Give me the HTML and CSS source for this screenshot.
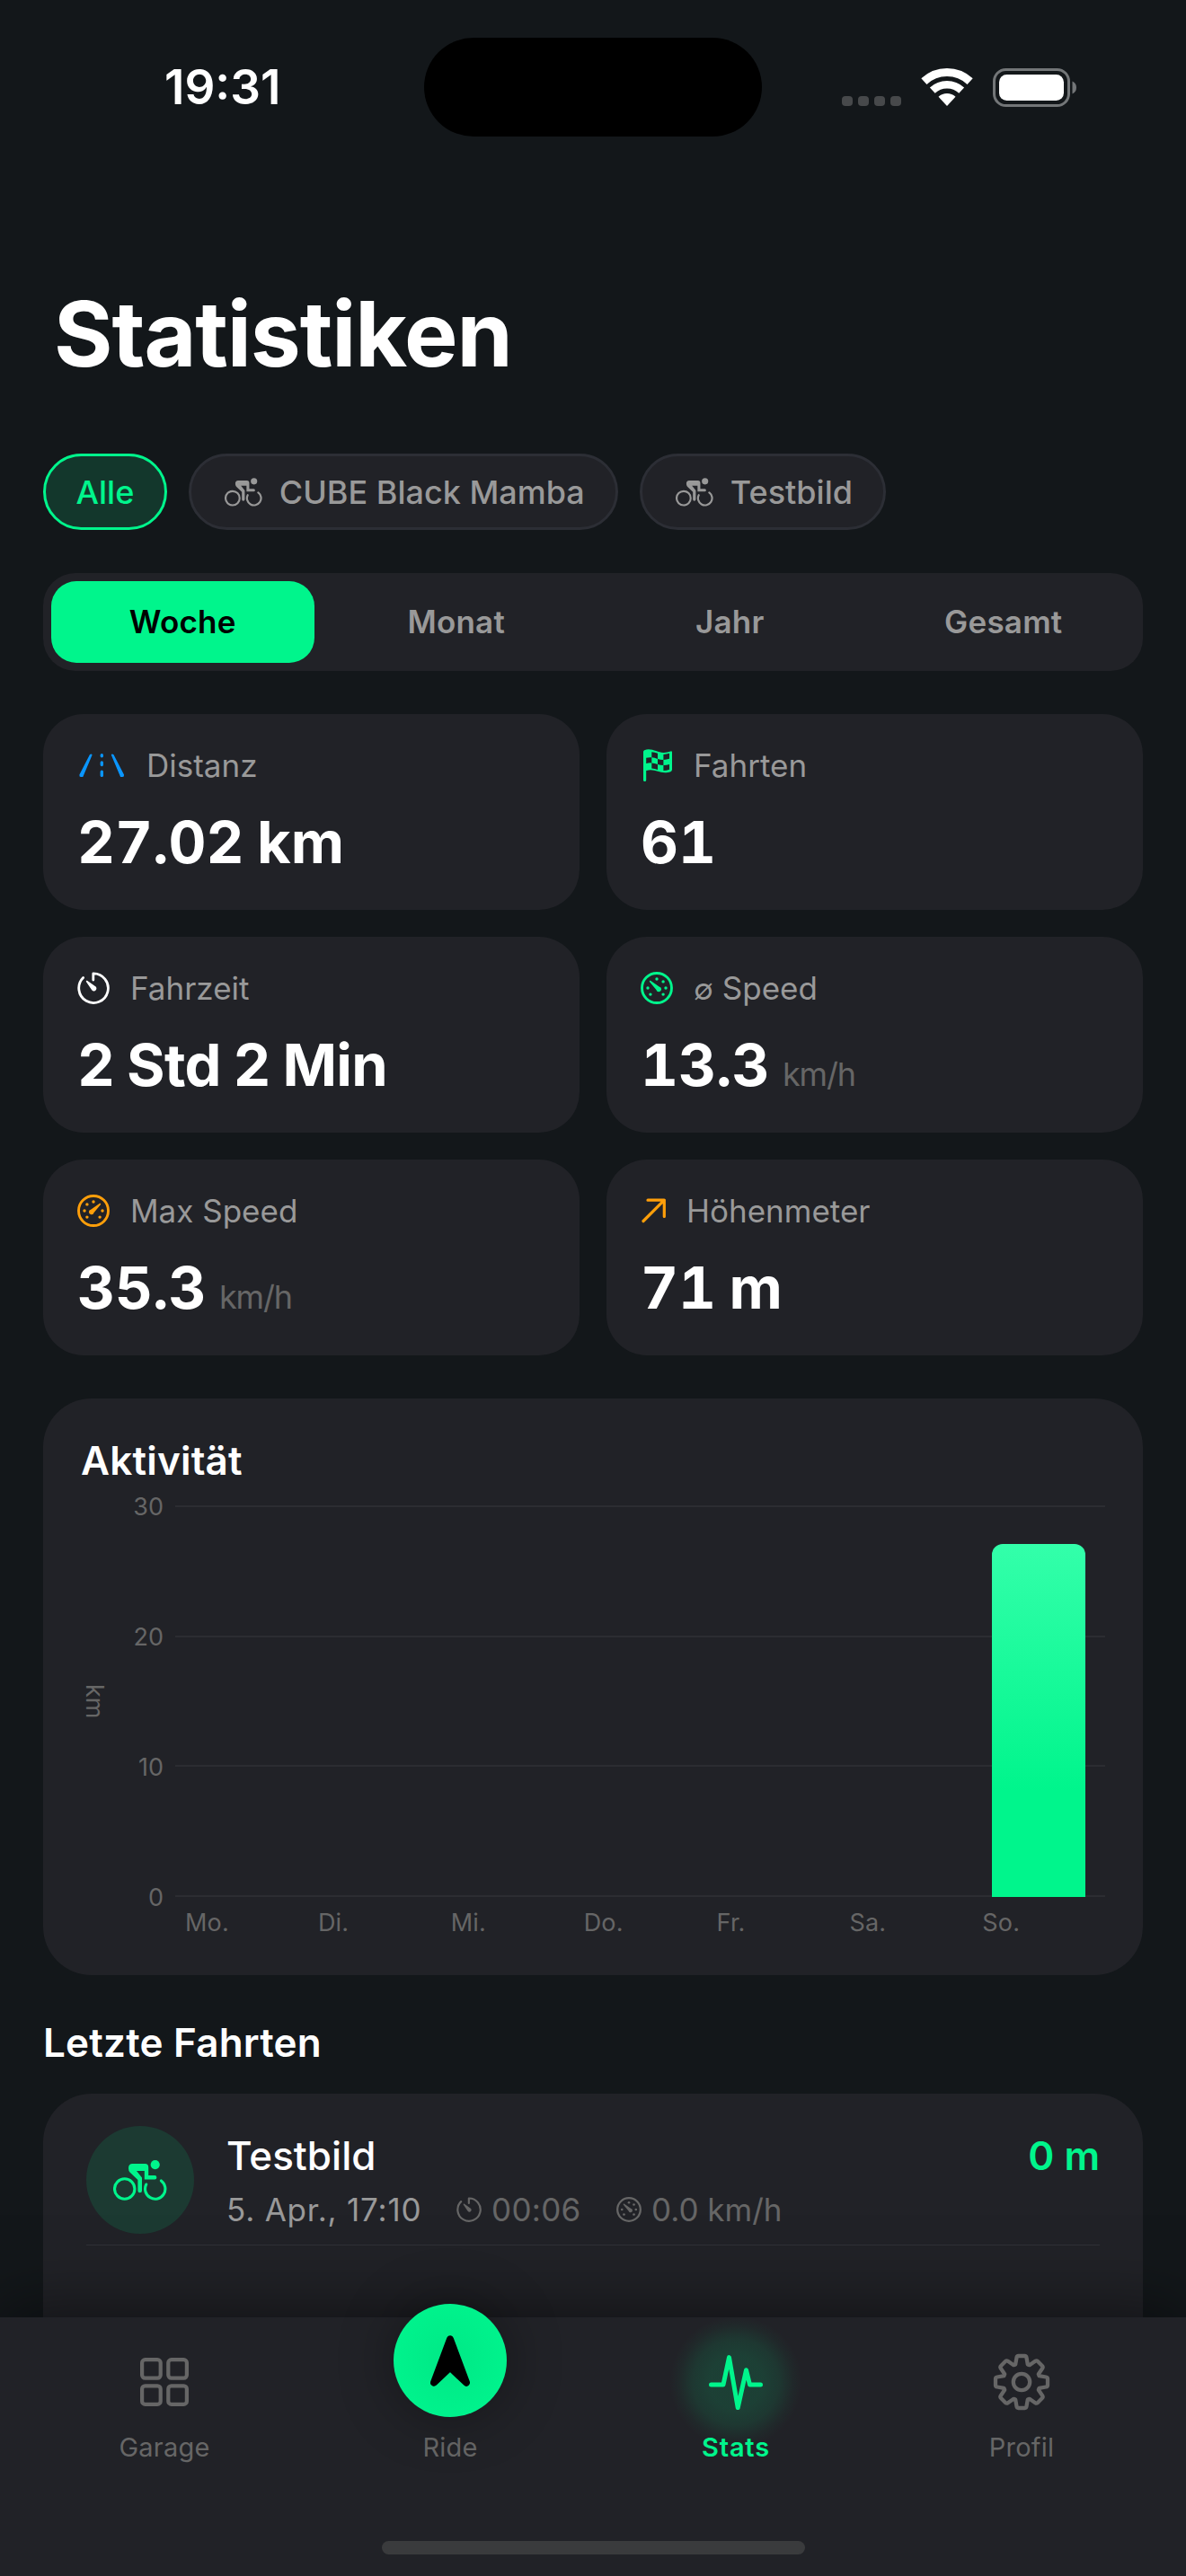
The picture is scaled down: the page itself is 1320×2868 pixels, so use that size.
FILE: index.html
```html
<!DOCTYPE html>
<html lang="de">
<head>
    <meta charset="UTF-8">
    <meta name="viewport" content="width=device-width, initial-scale=1.0">
    <title>Statistiken</title>
    <link rel="stylesheet" href="styles.css">
</head>
<body>
    <!-- Icons -->
    <svg class="sprite" width="0" height="0">
        <symbol id="bike" viewBox="0 0 60 45">
            <circle cx="12.7" cy="32" r="11.2" fill="none" stroke="currentColor" stroke-width="3.1"/>
            <path d="M36.7 27A11.2 11.2 0 1 0 53.4 23" fill="none" stroke="currentColor" stroke-width="3.1" stroke-linecap="round"/>
            <circle cx="46.7" cy="5.1" r="5.1" fill="currentColor"/>
            <path d="M21.5 4H35.5Q39.2 4 39.2 8V17H46.2a2.2 2.2 0 0 1 0 4.4H34.8V12H26L32 19.5V34a2.3 2.3 0 0 1-4.6 0V22L18.5 13.6Q17 11.8 17 9Q17 4 21.5 4Z" fill="currentColor"/>
        </symbol>
        <symbol id="timer" viewBox="0 0 36 36">
            <path d="M17.8 9V1.9A16.3 16.3 0 1 1 6.6 6.6" fill="none" stroke="currentColor" stroke-width="2.8" stroke-linecap="round" stroke-linejoin="round"/>
            <path d="M11 9.8L19.9 16a2.9 2.9 0 1 1-3.9 4L9.9 10.9Q9.6 9.2 11 9.8Z" fill="currentColor"/>
        </symbol>
        <symbol id="gauge" viewBox="0 0 36 36">
            <circle cx="18" cy="18" r="16.5" fill="none" stroke="currentColor" stroke-width="2.9"/>
            <path d="M11 9.8L20.6 16.4a2.9 2.9 0 1 1-3.2 3.6L9.9 10.9Q9.6 9.2 11 9.8Z" fill="currentColor"/>
            <g fill="currentColor">
                <circle cx="18" cy="8" r="1.7"/>
                <circle cx="25.1" cy="10.9" r="1.7"/>
                <circle cx="28" cy="18" r="1.7"/>
                <circle cx="25.1" cy="25.1" r="1.7"/>
                <circle cx="10.9" cy="25.1" r="1.7"/>
                <circle cx="8" cy="18" r="1.7"/>
            </g>
        </symbol>
    </svg>

    <header class="status-bar">
        <div class="time">19:31</div>
        <div class="island"></div>
        <div class="status-icons">
            <div class="signal"><i></i><i></i><i></i><i></i></div>
            <svg class="wifi" width="58" height="42" viewBox="0 0 58 42">
                <path d="M3.4 14.6A37.5 37.5 0 0 1 54.6 14.6" fill="none" stroke="#fff" stroke-width="9"/>
                <path d="M12.8 24.7A23.7 23.7 0 0 1 45.2 24.7" fill="none" stroke="#fff" stroke-width="8.5"/>
                <path d="M29 42L19.5 31.8A14 14 0 0 1 38.5 31.8Z" fill="#fff"/>
            </svg>
            <svg width="94" height="43" viewBox="0 0 94 43">
                <rect x="1.5" y="1.5" width="83" height="40" rx="13" fill="none" stroke="#737678" stroke-width="3"/>
                <rect x="7" y="7" width="72" height="29" rx="8.5" fill="#fff"/>
                <path d="M88.5 14.5Q93 16.5 93 21.5T88.5 28.5Z" fill="#737678"/>
            </svg>
        </div>
    </header>

    <main class="content">
        <h1>Statistiken</h1>

        <!-- Fahrrad-Filter -->
        <div class="chips">
            <div class="chip active">Alle</div>
            <div class="chip"><svg class="chip-icon"><use href="#bike"/></svg>CUBE Black Mamba</div>
            <div class="chip"><svg class="chip-icon"><use href="#bike"/></svg>Testbild</div>
        </div>

        <!-- Zeitraum -->
        <div class="segments">
            <div class="segment active">Woche</div>
            <div class="segment">Monat</div>
            <div class="segment">Jahr</div>
            <div class="segment">Gesamt</div>
        </div>

        <!-- Kennzahlen -->
        <div class="stats">
            <div class="stat">
                <div class="stat-label">
                    <svg class="blue" width="54" height="36" viewBox="0 0 54 36">
                        <path d="M14 6L2.4 28.5Q2 31 4 31H6.3L16.6 6.5Q16 4.6 14 6ZM40.4 6L52 28.5Q52.4 31 50.4 31H48.1L37.8 6.5Q38.4 4.6 40.4 6Z" fill="currentColor"/>
                        <path d="M27.3 6.7V7.8M27.3 15V17.5M27.3 25.2V29.4" stroke="currentColor" stroke-width="3.4" stroke-linecap="round"/>
                    </svg>
                    Distanz
                </div>
                <div class="stat-value">27.02 km</div>
            </div>
            <div class="stat">
                <div class="stat-label">
                    <svg class="green" width="36" height="36" viewBox="0 0 36 36">
                        <path fill-rule="evenodd" fill="currentColor" d="M3 3Q3 1.8 4.2 1.3C12-2 19 4.5 26 4Q29.5 3.8 33.4 2.4Q35 2 35 3.6V22.8Q35 24.6 33.3 25.2C22 29 17 21 6.2 24V34.5Q6.2 36 4.6 36T3 34.5ZM12.3 3.2V9.3Q15.6 9.6 19 10.9V4.8Q15.6 3.6 12.3 3.2ZM25.4 6V12Q28.8 11.8 32 10.8V4.8Q28.8 5.8 25.4 6ZM6.2 9.8V15.9Q9.2 15.2 12.3 15.4V9.3Q9.2 9 6.2 9.8ZM19 10.9V17Q22 18 25.4 18.1V12Q22 12 19 10.9ZM12.3 15.4V21.4Q15.6 21.8 19 23V17Q15.6 15.7 12.3 15.4ZM25.4 18.1V24Q28.8 24 32 22.8V17Q28.8 18 25.4 18.1Z"/>
                    </svg>
                    Fahrten
                </div>
                <div class="stat-value">61</div>
            </div>
            <div class="stat">
                <div class="stat-label"><svg class="white" width="36" height="36"><use href="#timer"/></svg>Fahrzeit</div>
                <div class="stat-value duration">2 Std 2 Min</div>
            </div>
            <div class="stat">
                <div class="stat-label"><svg class="green" width="36" height="36"><use href="#gauge"/></svg><span><span class="avg">∅</span> Speed</span></div>
                <div class="stat-value">13.3 <small>km/h</small></div>
            </div>
            <div class="stat">
                <div class="stat-label"><svg class="orange flip" width="36" height="36"><use href="#gauge"/></svg>Max Speed</div>
                <div class="stat-value">35.3 <small>km/h</small></div>
            </div>
            <div class="stat">
                <div class="stat-label">
                    <svg class="orange" width="28" height="28" viewBox="0 0 28 28">
                        <path d="M3 25.5L26.3 2.2M8 2.2H26.3V20.5" fill="none" stroke="currentColor" stroke-width="3.2" stroke-linecap="round" stroke-linejoin="round"/>
                    </svg>
                    Höhenmeter
                </div>
                <div class="stat-value">71 m</div>
            </div>
        </div>

        <!-- Diagramm -->
        <section class="card chart-card">
            <h2>Aktivität</h2>
            <div class="chart">
                <div class="axis-title">km</div>
                <div class="y-axis"><span>30</span><span>20</span><span>10</span><span>0</span></div>
                <div class="plot">
                    <div class="grid-lines"><i></i><i></i><i></i><i></i></div>
                    <div class="bars">
                        <div class="bar" style="height: 0%"></div>
                        <div class="bar" style="height: 0%"></div>
                        <div class="bar" style="height: 0%"></div>
                        <div class="bar" style="height: 0%"></div>
                        <div class="bar" style="height: 0%"></div>
                        <div class="bar" style="height: 0%"></div>
                        <div class="bar" style="height: 90.07%"></div>
                    </div>
                </div>
            </div>
            <div class="x-axis">
                <span>Mo.</span><span>Di.</span><span>Mi.</span><span>Do.</span><span>Fr.</span><span>Sa.</span><span>So.</span>
            </div>
        </section>

        <h2 class="list-title">Letzte Fahrten</h2>
        <section class="card rides">
            <div class="ride">
                <div class="avatar"><svg width="60" height="45"><use href="#bike"/></svg></div>
                <div class="ride-info">
                    <div class="ride-top"><span class="ride-name">Testbild</span><span class="ride-distance">0 m</span></div>
                    <div class="ride-meta">
                        <span class="date">5. Apr., 17:10</span>
                        <span class="meta meta-time"><svg width="28" height="28"><use href="#timer"/></svg>00:06</span>
                        <span class="meta"><svg width="28" height="28"><use href="#gauge"/></svg>0.0 km/h</span>
                    </div>
                </div>
            </div>
        </section>
    </main>

    <nav class="tab-bar">
        <div class="tab">
            <div class="tab-icon">
                <svg width="54" height="54" viewBox="0 0 54 54" fill="none" stroke="currentColor" stroke-width="4.2">
                    <rect x="2.1" y="2.1" width="20.6" height="20.6" rx="3.5"/>
                    <rect x="31.3" y="2.1" width="20.6" height="20.6" rx="3.5"/>
                    <rect x="2.1" y="31.3" width="20.6" height="20.6" rx="3.5"/>
                    <rect x="31.3" y="31.3" width="20.6" height="20.6" rx="3.5"/>
                </svg>
            </div>
            <span>Garage</span>
        </div>
        <div class="tab">
            <div class="tab-icon">
                <div class="ride-button">
                    <svg width="44" height="57" viewBox="0 0 44 57">
                        <path d="M22 4.3L4 52.7L22 35.6L40 52.7Z" fill="#000" stroke="#000" stroke-width="8" stroke-linejoin="round"/>
                    </svg>
                </div>
            </div>
            <span>Ride</span>
        </div>
        <div class="tab active">
            <div class="tab-icon glow">
                <svg width="60" height="61" viewBox="0 0 60 61">
                    <path d="M2.5 33H16L22.5 2.6L32.2 58.6L41.5 16.7L45.5 33H57.5" fill="none" stroke="currentColor" stroke-width="5" stroke-linecap="round" stroke-linejoin="round"/>
                </svg>
            </div>
            <span>Stats</span>
        </div>
        <div class="tab">
            <div class="tab-icon">
                <svg width="64" height="64" viewBox="0 0 64 64" fill="none" stroke="currentColor" stroke-width="4.3" stroke-linejoin="round">
                    <path d="M28.6 3H35.4Q37.2 3 37.5 4.8L38.8 12.4L40.8 13.2L47.2 8.8Q48.7 7.8 50 9.1L54.9 14Q56.2 15.3 55.2 16.8L50.8 23.2L51.6 25.2L59.2 26.5Q61 26.8 61 28.6V35.4Q61 37.2 59.2 37.5L51.6 38.8L50.8 40.8L55.2 47.2Q56.2 48.7 54.9 50L50 54.9Q48.7 56.2 47.2 55.2L40.8 50.8L38.8 51.6L37.5 59.2Q37.2 61 35.4 61H28.6Q26.8 61 26.5 59.2L25.2 51.6L23.2 50.8L16.8 55.2Q15.3 56.2 14 54.9L9.1 50Q7.8 48.7 8.8 47.2L13.2 40.8L12.4 38.8L4.8 37.5Q3 37.2 3 35.4V28.6Q3 26.8 4.8 26.5L12.4 25.2L13.2 23.2L8.8 16.8Q7.8 15.3 9.1 14L14 9.1Q15.3 7.8 16.8 8.8L23.2 13.2L25.2 12.4L26.5 4.8Q26.8 3 28.6 3Z"/>
                    <circle cx="32" cy="32" r="9.2"/>
                </svg>
            </div>
            <span>Profil</span>
        </div>
        <div class="home-indicator"></div>
    </nav>
</body>
</html>
```
FILE: styles.css
```css
* {
    box-sizing: border-box;
}
body {
    position: relative;
    width: 1320px;
    height: 2868px;
    margin: 0;
    overflow: hidden;
    background-color: #13171a;
    color: #fff;
    font-family: Inter, "Liberation Sans", sans-serif;
}
svg {
    display: block;
    flex: none;
}
.sprite {
    position: absolute;
}

/* Statusleiste */
.status-bar {
    display: grid;
    grid-template-columns: 472px 376px 472px;
    align-items: center;
    height: 110px;
    margin-top: 42px;
}
.time {
    padding-left: 183px;
    font-size: 53px;
    font-weight: 600;
}
.island {
    height: 110px;
    border-radius: 55px;
    background-color: #000;
}
.status-icons {
    display: flex;
    align-items: flex-end;
    padding-left: 89px;
}
.signal {
    display: flex;
    gap: 6px;
    margin: 0 22px 1px 0;
}
.signal i {
    width: 12px;
    height: 11px;
    border-radius: 4px;
    background-color: #47494b;
}
.wifi {
    margin: 0 22px 1px 0;
}

.content {
    padding: 160px 48px 0;
}
h1 {
    margin: 0 0 73px;
    padding-left: 12px;
    font-size: 100px;
    font-weight: 700;
    line-height: 120px;
    letter-spacing: -1.1px;
}
h2 {
    margin: 0;
    font-size: 44px;
    font-weight: 600;
    line-height: 54px;
    letter-spacing: 0.2px;
}

/* Filter */
.chips {
    display: flex;
    gap: 24px;
    margin-bottom: 48px;
}
.chip {
    display: flex;
    align-items: center;
    height: 85px;
    padding: 0 34px;
    border: 3px solid #2c2e35;
    border-radius: 43px;
    background-color: #212227;
    color: #999;
    font-size: 36px;
    font-weight: 500;
}
.chip.active {
    padding: 0 33.5px;
    border-color: #00f58c;
    background-color: #13372c;
    color: #00f58c;
}
.chip-icon {
    width: 42px;
    height: 32px;
    margin: 0 19px 0 3px;
}
.segments {
    display: grid;
    grid-template-columns: repeat(4, 1fr);
    gap: 12px;
    height: 109px;
    margin-bottom: 48px;
    padding: 9px;
    border-radius: 36px;
    background-color: #212227;
}
.segment {
    display: flex;
    align-items: center;
    justify-content: center;
    padding-bottom: 2px;
    border-radius: 28px;
    color: #999;
    font-size: 35px;
    font-weight: 600;
    letter-spacing: 0.2px;
}
.segment.active {
    background-color: #00f58c;
    color: #000;
}

/* Kennzahlen */
.stats {
    display: grid;
    grid-template-columns: 1fr 1fr;
    gap: 30px;
    margin-bottom: 48px;
}
.stat {
    height: 218px;
    padding: 36px 38px 0;
    border-radius: 45px;
    background-color: #212227;
}
.stat-label {
    display: flex;
    align-items: center;
    gap: 23px;
    height: 43px;
    margin-bottom: 24px;
    padding-bottom: 1px;
    color: #999;
    font-size: 35px;
}
.stat-value {
    font-size: 65px;
    font-weight: 700;
    line-height: 79px;
    word-spacing: -3px;
    font-feature-settings: "tnum";
}
.stat-value small {
    color: #666;
    font-size: 36px;
    font-weight: 400;
    letter-spacing: -1.2px;
}
.duration {
    letter-spacing: -0.7px;
}
.avg {
    font-size: 32px;
}
.blue {
    color: #0a96ff;
}
.green {
    color: #00f58c;
}
.white {
    color: #fff;
}
.orange {
    color: #ff9f0a;
}
.flip {
    transform: scaleX(-1);
}

/* Diagramm */
.card {
    border-radius: 54px;
    background-color: #212227;
}
.chart-card {
    height: 642px;
    margin-bottom: 48px;
    padding: 42px 42px 0;
}
.chart {
    display: flex;
    height: 436px;
    margin-top: 23px;
}
.axis-title {
    width: 30px;
    color: #666;
    font-size: 27px;
    line-height: 30px;
    text-align: center;
    writing-mode: vertical-rl;
}
.y-axis {
    display: flex;
    flex-direction: column;
    justify-content: space-between;
    width: 62px;
    margin: -13px 13px -15px 0;
    color: #666;
    font-size: 27px;
    line-height: 29px;
    text-align: right;
}
.plot {
    display: grid;
    flex: 1;
}
.grid-lines,
.bars {
    grid-area: 1 / 1;
    display: flex;
}
.grid-lines {
    flex-direction: column;
    justify-content: space-between;
}
.grid-lines i {
    height: 2px;
    background-color: #2c2d32;
}
.bars {
    align-items: flex-end;
    justify-content: space-between;
    padding: 0 22px;
}
.bar {
    width: 104px;
    border-radius: 12px 12px 0 0;
    background: linear-gradient(#33ffaa, #00f58c 70%);
}
.x-axis {
    display: flex;
    padding-left: 116px;
}
.x-axis span {
    flex: none;
    width: 147.9px;
    color: #666;
    font-size: 27px;
    line-height: 57px;
    letter-spacing: 0.2px;
}

/* Fahrten */
.list-title {
    margin-bottom: 30px;
}
.rides {
    height: 600px;
    padding: 36px 48px 0;
}
.ride {
    display: flex;
    gap: 36px;
    padding-bottom: 12px;
    border-bottom: 1px solid #303137;
}
.avatar {
    display: flex;
    align-items: center;
    justify-content: center;
    width: 120px;
    height: 120px;
    border-radius: 50%;
    background-color: #1c3a32;
    color: #00f58c;
}
.ride-info {
    flex: 1;
    padding-top: 6px;
}
.ride-top {
    display: flex;
    justify-content: space-between;
    font-size: 44px;
    font-weight: 500;
    line-height: 54px;
}
.ride-distance {
    color: #00f58c;
    font-weight: 600;
}
.ride-meta {
    display: flex;
    align-items: center;
    margin-top: 11px;
    font-size: 35px;
    line-height: 44px;
}
.date {
    width: 256px;
    color: #999;
    letter-spacing: 0.8px;
}
.meta {
    display: flex;
    align-items: center;
    gap: 11px;
    color: #666;
}
.meta-time {
    width: 178px;
    letter-spacing: 0.3px;
}

/* Tab-Leiste */
.tab-bar {
    position: absolute;
    right: 0;
    bottom: 0;
    left: 0;
    display: flex;
    height: 288px;
    padding: 17px 24px 0;
    background-color: #212227;
    box-shadow: 0 -6px 72px rgba(0, 0, 0, 0.5);
}
.tab {
    display: flex;
    flex: 1;
    flex-direction: column;
    align-items: center;
    color: #666;
    font-size: 29px;
    line-height: 35px;
    letter-spacing: 0.2px;
}
.tab.active {
    color: #00f58c;
    font-weight: 600;
    letter-spacing: 0.8px;
}
.tab-icon {
    display: flex;
    align-items: center;
    justify-content: center;
    width: 170px;
    height: 110px;
}
.glow {
    position: relative;
}
.glow::before {
    content: "";
    position: absolute;
    top: -20px;
    left: 10px;
    width: 150px;
    height: 150px;
    background: radial-gradient(circle closest-side, rgba(0, 245, 140, 0.14) 40%, rgba(0, 245, 140, 0.1) 64%, rgba(0, 245, 140, 0.03) 84%, transparent 98%);
}
.ride-button {
    display: flex;
    flex: none;
    align-items: center;
    justify-content: center;
    width: 126px;
    height: 126px;
    border-radius: 50%;
    background: radial-gradient(circle, #00e886, #00f28c 60px);
    box-shadow: 0 0 60px rgba(0, 0, 0, 0.35);
    transform: translateY(-24px);
}
.home-indicator {
    position: absolute;
    bottom: 24px;
    left: 425px;
    width: 471px;
    height: 15px;
    border-radius: 8px;
    background-color: #3a3b3d;
}
```
